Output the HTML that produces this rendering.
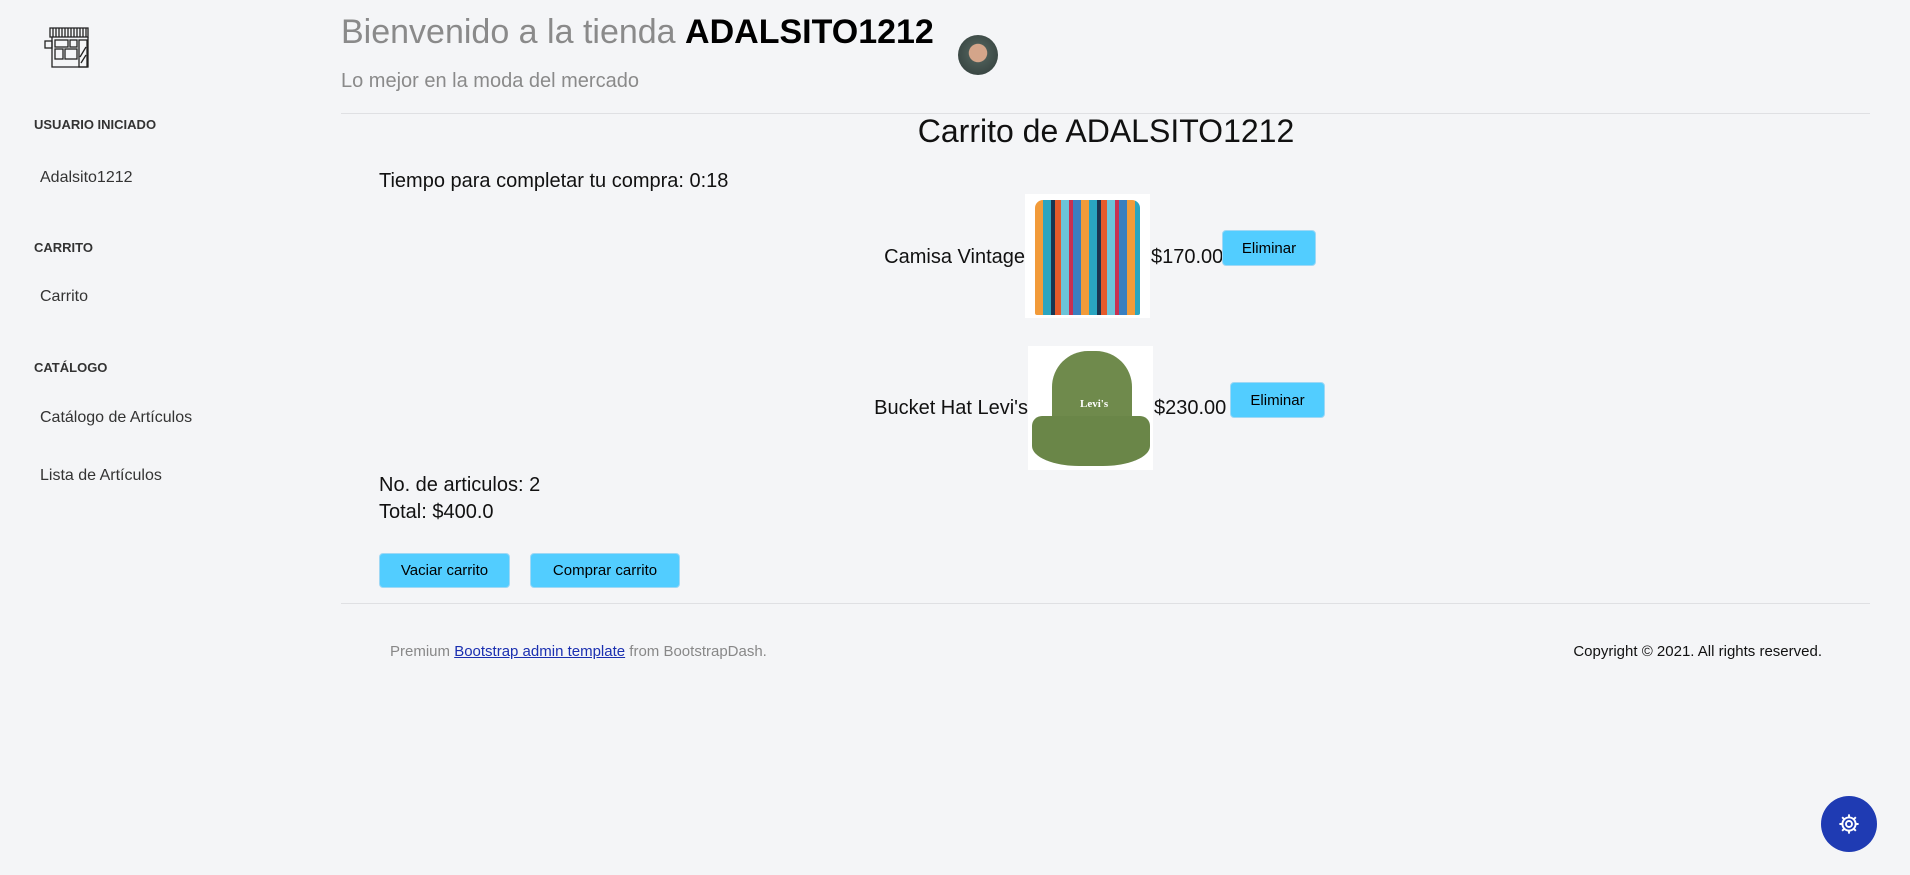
<!DOCTYPE html>
<html><head><meta charset="utf-8"><style>
*{margin:0;padding:0;box-sizing:border-box}
body{width:1910px;height:875px;background:#f4f5f7;font-family:"Liberation Sans",sans-serif;position:relative;overflow:hidden;color:#111}
.a{position:absolute;white-space:nowrap}
.sh{font-size:13px;font-weight:bold;color:#333;left:34px}
.si{font-size:16px;color:#333;left:40px}
.btn{position:absolute;background:#52cdff;border:1px solid #9fd8f5;border-radius:4px;font-size:15px;color:#000;display:flex;align-items:center;justify-content:center}
.t{font-size:20px;color:#111}
</style></head><body>
<svg class="a" style="left:44px;top:27px" width="50" height="42" viewBox="0 0 50 42" fill="none" stroke="#222" stroke-width="1.3">
<path d="M6 1h38v9H6z"/><path d="M9 1v9M12 1v9M15 1v9M18 1v9M21 1v9M24 1v9M27 1v9M30 1v9M33 1v9M36 1v9M39 1v9M42 1v9"/>
<path d="M8 10v30h36V10"/><rect x="1" y="14" width="7" height="7"/><rect x="11" y="13" width="13" height="7"/><rect x="26" y="13" width="7" height="7"/><rect x="11" y="22" width="8" height="10"/><rect x="21" y="22" width="12" height="10"/><rect x="35" y="13" width="8" height="27"/><path d="M36 30l6-10M37 36l5-8"/>
</svg>
<div class="a sh" style="top:117px">USUARIO INICIADO</div>
<div class="a si" style="top:169px">Adalsito1212</div>
<div class="a sh" style="top:240px">CARRITO</div>
<div class="a si" style="top:288px">Carrito</div>
<div class="a sh" style="top:360px">CATÁLOGO</div>
<div class="a si" style="top:409px">Catálogo de Artículos</div>
<div class="a si" style="top:467px">Lista de Artículos</div>

<div class="a" style="left:341px;top:13px;font-size:34px;color:#8a8a8a">Bienvenido a la tienda <b style="color:#000">ADALSITO1212</b></div>
<div class="a" style="left:958px;top:35px;width:40px;height:40px;border-radius:50%;background:radial-gradient(circle at 50% 45%,#d4a58a 0 30%,#4a5a55 32%,#2f3a38 100%)"></div>
<div class="a" style="left:341px;top:70px;font-size:20px;color:#8a8a8a">Lo mejor en la moda del mercado</div>
<div class="a" style="left:341px;top:113px;width:1529px;height:1px;background:#dfe0e3"></div>
<div class="a" style="left:0;width:2212px;text-align:center;top:113px;font-size:32px;color:#111">Carrito de ADALSITO1212</div>
<div class="a t" style="left:379px;top:170px">Tiempo para completar tu compra: 0:18</div>

<div class="a t" style="right:885px;top:246px">Camisa Vintage</div>
<div class="a" style="left:1025px;top:194px;width:125px;height:124px;background:#fff">
<div style="position:absolute;left:10px;top:6px;width:105px;height:115px;border-radius:8px 8px 2px 2px;background:repeating-linear-gradient(90deg,#f29b3a 0 8px,#2aa5c0 8px 16px,#1b3550 16px 20px,#e55a2a 20px 26px,#6cc3d8 26px 34px,#c83050 34px 38px,#3a7fc0 38px 46px)"></div></div>
<div class="a t" style="left:1151px;top:246px">$170.00</div>
<div class="btn" style="left:1222px;top:230px;width:94px;height:36px">Eliminar</div>

<div class="a t" style="right:882px;top:397px">Bucket Hat Levi's</div>
<div class="a" style="left:1028px;top:346px;width:125px;height:124px;background:#fff">
<div style="position:absolute;left:24px;top:5px;width:80px;height:80px;border-radius:45% 45% 10% 10%;background:#6f8a4c"></div>
<div style="position:absolute;left:4px;top:70px;width:118px;height:50px;border-radius:10px 10px 40% 40%;background:#6a8648"></div>
<div style="position:absolute;left:52px;top:52px;font-size:11px;font-weight:bold;color:#fff;font-family:'Liberation Serif',serif">Levi's</div></div>
<div class="a t" style="left:1154px;top:397px">$230.00</div>
<div class="btn" style="left:1230px;top:382px;width:95px;height:36px">Eliminar</div>

<div class="a t" style="left:379px;top:474px">No. de articulos: 2</div>
<div class="a t" style="left:379px;top:501px">Total: $400.0</div>
<div class="btn" style="left:379px;top:553px;width:131px;height:35px">Vaciar carrito</div>
<div class="btn" style="left:530px;top:553px;width:150px;height:35px">Comprar carrito</div>
<div class="a" style="left:341px;top:603px;width:1529px;height:1px;background:#dfe0e3"></div>
<div class="a" style="left:390px;top:643px;font-size:15px;color:#888">Premium <span style="color:#1a2fb0;text-decoration:underline">Bootstrap admin template</span> from BootstrapDash.</div>
<div class="a" style="right:88px;top:643px;font-size:15px;color:#111">Copyright © 2021. All rights reserved.</div>
<div class="a" style="left:1821px;top:796px;width:56px;height:56px;border-radius:50%;background:#1f3bb3;display:flex;align-items:center;justify-content:center">
<svg width="24" height="24" viewBox="0 0 20 20" fill="none" stroke="#fff" stroke-width="1.6"><circle cx="10" cy="10" r="2.5"/><path d="M10 2v3M10 15v3M2 10h3M15 10h3M4.3 4.3l2.1 2.1M13.6 13.6l2.1 2.1M4.3 15.7l2.1-2.1M13.6 6.4l2.1-2.1"/><circle cx="10" cy="10" r="5.5"/></svg></div>
</body></html>
